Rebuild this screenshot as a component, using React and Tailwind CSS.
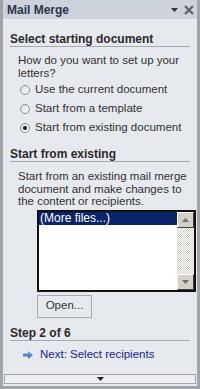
import React from "react";

const Radio = ({ checked, label }) => (
  <div className="flex items-center h-[19px] pl-[10px]">
    <span className="w-[10px] h-[10px] rounded-full border border-[#8c9096] bg-gradient-to-br from-[#d9dbde] to-[#ffffff] flex items-center justify-center">
      {checked && <span className="w-[4px] h-[4px] rounded-full bg-[#1a1a1a]" />}
    </span>
    <span className="ml-[5px]">{label}</span>
  </div>
);

const Heading = ({ children, className = "" }) => (
  <div className={"font-bold text-[12px] leading-[13px] text-[#2b2b2b] border-b border-[#a7abb0] " + className}>
    {children}
  </div>
);

const ScrollBtn = ({ up }) => (
  <div className="h-[16px] bg-[#d4d0c8] border-t border-l border-t-white border-l-white border-b border-r border-b-[#404040] border-r-[#404040] flex items-center justify-center">
    <svg width="7" height="4" viewBox="0 0 7 4">
      <path d={up ? "M3.5 0L7 4H0z" : "M0 0h7L3.5 4z"} fill="#6f6f6f" />
    </svg>
  </div>
);

const Arrow = ({ left }) => (
  <svg width="10" height="8" viewBox="0 0 10 8" className={left ? "rotate-180" : ""}>
    <defs>
      <linearGradient id="ag" x1="0" y1="0" x2="0" y2="1">
        <stop offset="0" stopColor="#7fa6ec" />
        <stop offset="1" stopColor="#2f5fc4" />
      </linearGradient>
    </defs>
    <path d="M0 2.5h5V0l5 4-5 4V5.5H0z" fill="url(#ag)" />
  </svg>
);

export default function App() {
  return (
    <div className="w-[200px] h-[389px] flex flex-col bg-[#e6e9ee] border-x-[3px] border-b-[3px] border-[#a0a5ab] overflow-hidden text-[11.5px] text-[#333] font-['Liberation_Sans',Arial,sans-serif]">
      {/* title bar */}
      <div className="h-[19px] shrink-0 bg-[#cdd3db] flex items-center pl-[4px] pr-[3px]">
        <span className="font-bold text-[12px] text-[#2c3749]">Mail Merge</span>
        <div className="ml-auto flex items-center gap-[6px]">
          <svg width="7" height="4" viewBox="0 0 7 4">
            <path d="M0 0h7L3.5 4z" fill="#333" />
          </svg>
          <svg width="10" height="10" viewBox="0 0 10 10">
            <path d="M1 1l8 8M9 1l-8 8" stroke="#62666c" strokeWidth="2.4" />
          </svg>
        </div>
      </div>

      {/* task pane content */}
      <div className="flex-1 overflow-hidden px-[7px]">
        <Heading className="mt-[14px]">Select starting document</Heading>
        <div className="mt-[7px] ml-[8px] leading-[13px]">
          How do you want to set up your letters?
        </div>
        <Radio label="Use the current document" />
        <Radio label="Start from a template" />
        <Radio checked label="Start from existing document" />

        <Heading className="mt-[11px]">Start from existing</Heading>
        <div className="mt-[8px] ml-[8px] leading-[12.5px]">
          Start from an existing mail merge document and make changes to the content or recipients.
        </div>

        <div className="mt-[2px] ml-[27px] w-[159px] h-[82px] border-2 border-[#111] bg-white flex">
          <div className="flex-1">
            <div className="h-[13px] bg-[#0a246a] text-white text-[12px] leading-[13px] pl-[1px]">(More files...)</div>
          </div>
          <div className="w-[17px] flex flex-col bg-[repeating-conic-gradient(#d4d0c8_0_25%,#ffffff_0_50%)] bg-[length:2px_2px]">
            <ScrollBtn up />
            <div className="flex-1" />
            <ScrollBtn />
          </div>
        </div>

        <button className="mt-[3px] ml-[27px] w-[55px] h-[23px] border border-[#a9acb0] text-[#333] leading-none">
          Open...
        </button>

        <Heading className="mt-[9px]">Step 2 of 6</Heading>
        <div className="mt-[8px] flex items-center h-[13px] pl-[13px] text-[#1c1c9c]">
          <Arrow />
          <span className="ml-[7px]">Next: Select recipients</span>
        </div>
        <div className="mt-[12px] flex items-center h-[13px] pl-[13px] text-[#1c1c9c]">
          <Arrow left />
          <span className="ml-[7px]">Previous: Starting document</span>
        </div>
      </div>

      {/* scroll down bar */}
      <div className="h-[10px] shrink-0 mx-[1px] mb-[2px] border border-[#a0a4a9] bg-[#eceef1] flex items-center justify-center">
        <svg width="7" height="4" viewBox="0 0 7 4">
          <path d="M0 0h7L3.5 4z" fill="#222" />
        </svg>
      </div>
    </div>
  );
}
